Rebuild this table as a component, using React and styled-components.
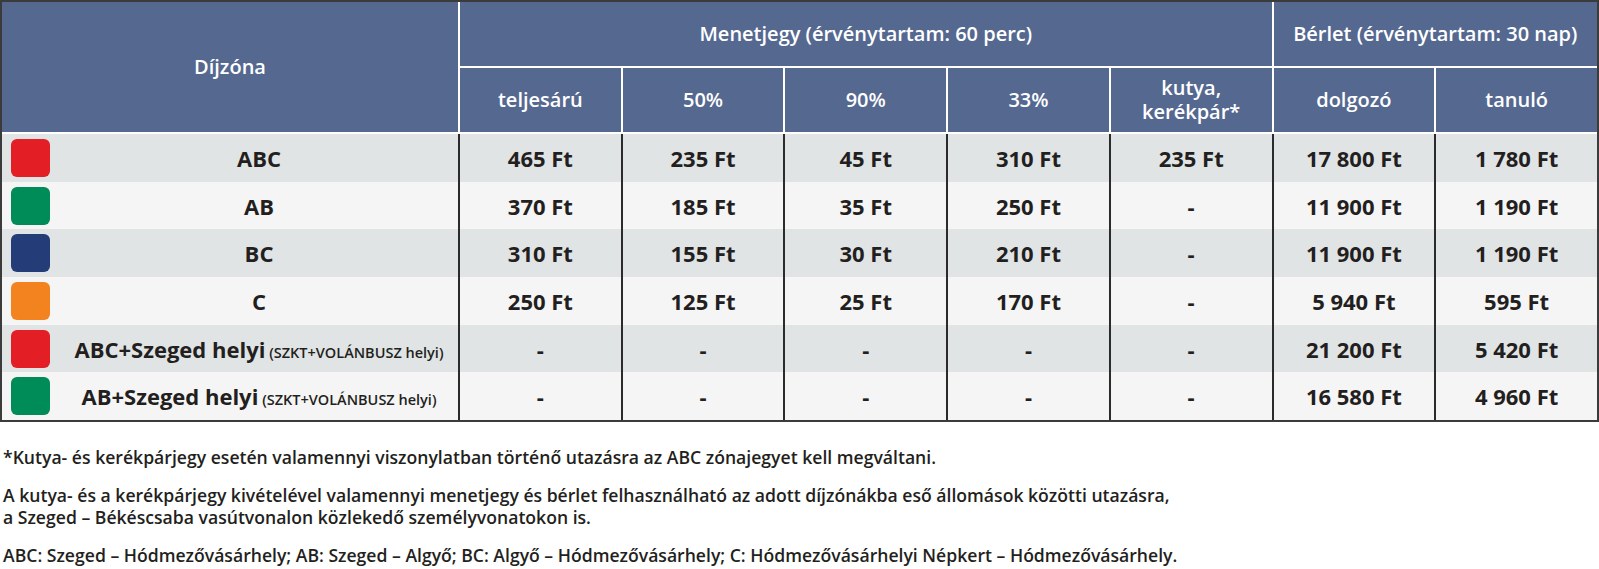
import React from 'react'
import styled, { createGlobalStyle } from 'styled-components'

const GlobalStyle = createGlobalStyle`
  * { box-sizing: border-box; }
  body {
    margin: 0;
    background: #fff;
    font-family: "Open Sans", "Noto Sans", sans-serif;
    color: #231f20;
  }
`

const Page = styled.div`
  width: 1599px;
`

const Frame = styled.div`
  border: 2px solid #3b3b3b;
  width: 1599px;
`

const Table = styled.table`
  width: 100%;
  border-spacing: 0;
  table-layout: fixed;
`

const HeadRow = styled.tr`
  height: 66px;
`

const HeadCell = styled.th`
  background: #556890;
  color: #fff;
  font-weight: 600;
  font-size: 20px;
  line-height: 24px;
  text-align: center;
  vertical-align: middle;
  padding: 0 4px;
  border-bottom: 2px solid #fff;
  border-left: ${p => (p.$first ? 'none' : '2px solid #fff')};
`

const BodyRow = styled.tr`
  height: 47.7px;
  background: ${p => (p.$odd ? '#e1e4e5' : '#f5f5f5')};
`

const Cell = styled.td`
  padding: 0;
  text-align: center;
  vertical-align: middle;
  font-weight: 700;
  font-size: 22px;
  color: #231f20;
  border-left: 2px solid #2b2b2b;
`

const ZoneCell = styled.td`
  padding: 0;
  vertical-align: middle;
`

const Zone = styled.div`
  display: grid;
  grid-template-columns: 58px 1fr;
  align-items: center;
`

const Swatch = styled.span`
  display: block;
  width: 39px;
  height: 38px;
  margin-left: 9px;
  border-radius: 6px;
  background: ${p => p.$color};
`

const ZoneName = styled.span`
  text-align: center;
  font-weight: 700;
  font-size: 22px;
  white-space: nowrap;
`

const Small = styled.span`
  font-size: 14.5px;
  font-weight: 600;
`

const Notes = styled.div`
  padding: 24px 0 0 3px;
  font-size: 17.6px;
  font-weight: 600;
  line-height: 22px;
  color: #231f20;
`

const Note = styled.p`
  margin: 0 0 ${p => p.$gap ?? 16}px;
`

const COLORS = {
  red: '#e31e25',
  green: '#008c58',
  navy: '#243c78',
  orange: '#f2831f',
}

const rows = [
  { color: COLORS.red, name: 'ABC', values: ['465 Ft', '235 Ft', '45 Ft', '310 Ft', '235 Ft', '17 800 Ft', '1 780 Ft'] },
  { color: COLORS.green, name: 'AB', values: ['370 Ft', '185 Ft', '35 Ft', '250 Ft', '-', '11 900 Ft', '1 190 Ft'] },
  { color: COLORS.navy, name: 'BC', values: ['310 Ft', '155 Ft', '30 Ft', '210 Ft', '-', '11 900 Ft', '1 190 Ft'] },
  { color: COLORS.orange, name: 'C', values: ['250 Ft', '125 Ft', '25 Ft', '170 Ft', '-', '5 940 Ft', '595 Ft'] },
  { color: COLORS.red, name: 'ABC+Szeged helyi', extra: '(SZKT+VOLÁNBUSZ helyi)', values: ['-', '-', '-', '-', '-', '21 200 Ft', '5 420 Ft'] },
  { color: COLORS.green, name: 'AB+Szeged helyi', extra: '(SZKT+VOLÁNBUSZ helyi)', values: ['-', '-', '-', '-', '-', '16 580 Ft', '4 960 Ft'] },
]

const App = () => {
  return (
    <Page>
      <GlobalStyle />
      <Frame>
        <Table>
          <colgroup>
            <col style={{ width: 456 }} />
            <col />
            <col />
            <col />
            <col />
            <col />
            <col />
            <col />
          </colgroup>
          <thead>
            <HeadRow>
              <HeadCell $first rowSpan={2}>Díjzóna</HeadCell>
              <HeadCell colSpan={5}>Menetjegy (érvénytartam: 60 perc)</HeadCell>
              <HeadCell colSpan={2}>Bérlet (érvénytartam: 30 nap)</HeadCell>
            </HeadRow>
            <HeadRow>
              <HeadCell>teljesárú</HeadCell>
              <HeadCell>50%</HeadCell>
              <HeadCell>90%</HeadCell>
              <HeadCell>33%</HeadCell>
              <HeadCell>kutya,<br />kerékpár*</HeadCell>
              <HeadCell>dolgozó</HeadCell>
              <HeadCell>tanuló</HeadCell>
            </HeadRow>
          </thead>
          <tbody>
            {rows.map((row, i) => (
              <BodyRow key={i} $odd={i % 2 === 0}>
                <ZoneCell>
                  <Zone>
                    <Swatch $color={row.color} />
                    <ZoneName>
                      {row.name}
                      {row.extra && <Small> {row.extra}</Small>}
                    </ZoneName>
                  </Zone>
                </ZoneCell>
                {row.values.map((v, j) => (
                  <Cell key={j}>{v}</Cell>
                ))}
              </BodyRow>
            ))}
          </tbody>
        </Table>
      </Frame>
      <Notes>
        <Note>*Kutya- és kerékpárjegy esetén valamennyi viszonylatban történő utazásra az ABC zónajegyet kell megváltani.</Note>
        <Note>
          A kutya- és a kerékpárjegy kivételével valamennyi menetjegy és bérlet felhasználható az adott díjzónákba eső állomások közötti utazásra,
          <br />a Szeged – Békéscsaba vasútvonalon közlekedő személyvonatokon is.
        </Note>
        <Note $gap={0}>ABC: Szeged – Hódmezővásárhely; AB: Szeged – Algyő; BC: Algyő – Hódmezővásárhely; C: Hódmezővásárhelyi Népkert – Hódmezővásárhely.</Note>
      </Notes>
    </Page>
  )
}

export default App
